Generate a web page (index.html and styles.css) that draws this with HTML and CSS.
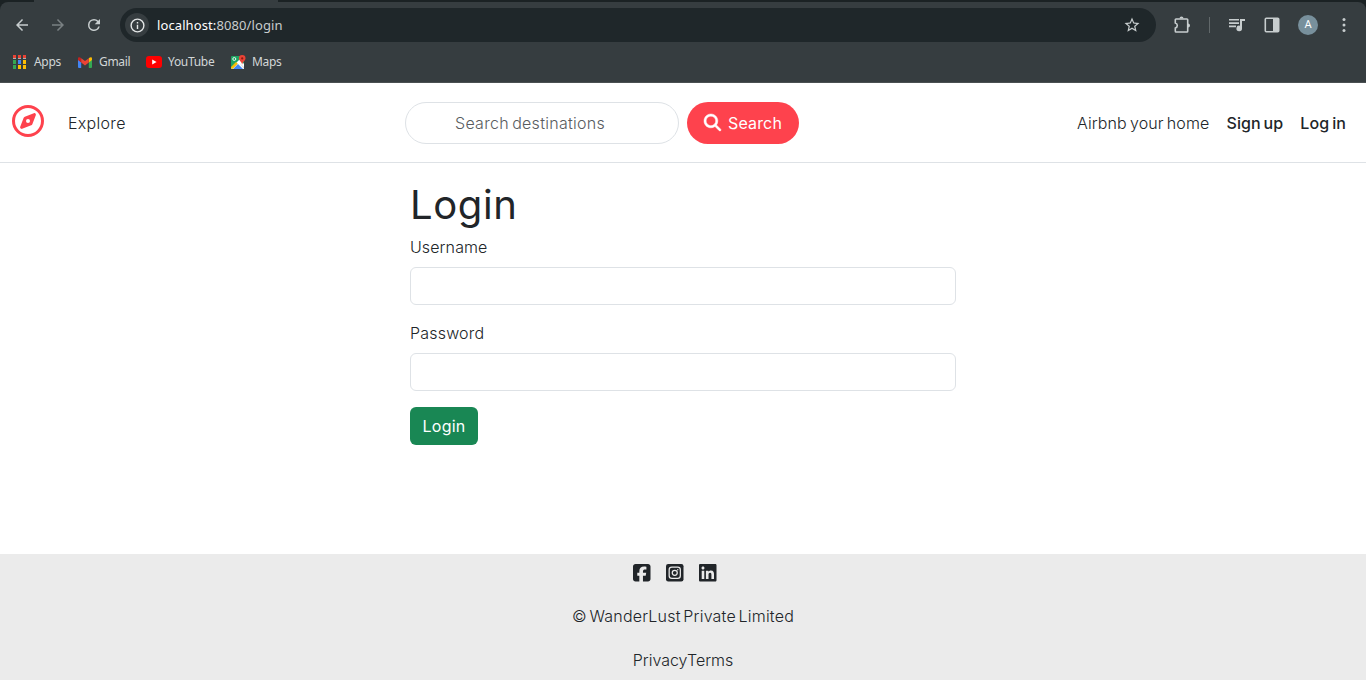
FILE: index.html
```html
<!DOCTYPE html>
<html lang="en">
<head>
<meta charset="utf-8">
<title>WanderLust</title>
<link rel="stylesheet" href="styles.css">
</head>
<body>
<div class="browser">
  <div class="tabstrip"><span class="active-tab"></span></div>
  <div class="panel">
    <div class="toolbar">
      <svg class="ic back" viewBox="0 0 24 24"><path d="M20 11H7.8l5.6-5.6L12 4l-8 8 8 8 1.4-1.4L7.8 13H20z"/></svg>
      <svg class="ic forward" viewBox="0 0 24 24"><path d="M12 4l-1.4 1.4 5.6 5.6H4v2h12.2l-5.6 5.6L12 20l8-8z"/></svg>
      <svg class="ic reload" viewBox="0 0 24 24"><path d="M17.65 6.35A7.96 7.96 0 0 0 12 4a8 8 0 1 0 7.73 10h-2.08A6 6 0 1 1 12 6c1.66 0 3.14.69 4.22 1.78L13 11h7V4z"/></svg>
      <div class="omnibox">
        <span class="site-info"><svg class="ic" viewBox="0 0 24 24"><path d="M11 7h2v2h-2zm0 4h2v6h-2zm1-9a10 10 0 1 0 0 20 10 10 0 0 0 0-20zm0 18a8 8 0 1 1 0-16 8 8 0 0 1 0 16z"/></svg></span>
        <span class="url"><b>localhost:</b>8080/login</span>
        <svg class="ic star" viewBox="0 0 24 24"><path d="M22 9.24l-7.19-.62L12 2 9.19 8.63 2 9.24l5.46 4.73L5.82 21 12 17.27 18.18 21l-1.63-7.03zM12 15.4l-3.76 2.27 1-4.28-3.32-2.88 4.38-.38L12 6.1l1.71 4.04 4.38.38-3.32 2.88 1 4.28z"/></svg>
      </div>
      <svg class="ic puzzle" viewBox="0 0 18 18"><path class="line" d="M3 3h11a.7.7 0 0 1 .7.700V15.300a.7.7 0 0 1-.7.700H3a.7.7 0 0 1-.7-.700V12q2-.5 2-2.500t-2-2.500V3.700A.7.7 0 0 1 3 3z"/><path d="M6.500 2.600a2 2 0 0 1 4 0zM15 7.500a2 2 0 0 1 0 4z"/></svg>
      <span class="divider"></span>
      <svg class="ic queue" viewBox="0 0 18 18"><path d="M1 3h10v1.6H1zM1 6.3h10v1.6H1zM1 9.6h7v1.6H1zM12 3h5v2h-3v7.2a2.8 2.8 0 1 1-2-2.5z"/></svg>
      <svg class="ic side" viewBox="0 0 16 16"><rect class="line" x="1.3" y="1.3" width="13.4" height="13.4" rx="1"/><path d="M9 1h6v14H9z"/></svg>
      <span class="avatar">A</span>
      <svg class="ic dots" viewBox="0 0 4 16"><circle cx="2" cy="2.6" r="1.5"/><circle cx="2" cy="8" r="1.5"/><circle cx="2" cy="13.4" r="1.5"/></svg>
    </div>
    <div class="bookmarks">
      <svg class="bm-ic apps" viewBox="0 0 13 14"><path fill="#ea4335" d="M0 0h3v3H0zM5 0h3v3H5zM10 0h3v3h-3z"/><path fill="#34a853" d="M0 5h3v4H0zM0 10h3v4H0z"/><path fill="#4285f4" d="M5 5h3v4H5z"/><path fill="#fbbc04" d="M10 5h3v4h-3zM5 10h3v4H5zM10 10h3v4h-3z"/><path fill="#aab0b1" d="M0 3h3v1H0zM5 3h3v1H5zM10 3h3v1h-3z"/></svg>
      <span class="bm bm-apps">Apps</span>
      <svg class="bm-ic gmail" viewBox="0 0 14 11"><path fill="#4285f4" d="M0 2.5l3.2 2.4V11H1a1 1 0 0 1-1-1z"/><path fill="#34a853" d="M14 2.5l-3.2 2.4V11H13a1 1 0 0 0 1-1z"/><path fill="#fbbc04" d="M10.8 1.2l1-.7Q14-.5 14 1.6v1.5l-3.2 2.4z"/><path fill="#c5221f" d="M3.2 1.2l-1-.7Q0-.5 0 1.6v1.5l3.2 2.4z"/><path fill="#ea4335" d="M3.2 1.2L7 4.1l3.8-2.9v4.3L7 8.4 3.2 5.5z"/></svg>
      <span class="bm bm-gmail">Gmail</span>
      <svg class="bm-ic youtube" viewBox="0 0 16 12"><rect width="16" height="12" rx="3" fill="#f00"/><path fill="#fff" d="M6.2 3.4v5.2L10.6 6z"/></svg>
      <span class="bm bm-youtube">YouTube</span>
      <svg class="bm-ic maps" viewBox="0 0 15 15"><rect y="1" width="13" height="13" rx="1" fill="#1ea362"/><path fill="#fff" d="M0 13L9 4l4 5v5H1z"/><path fill="#4285f4" d="M2 14l5-5 5 5z"/><path fill="#fbbc04" d="M0 12l5-5 1.8 1.8L1.6 14 0 13z"/><path fill="#d5d8d9" d="M8.5 8l4.5 4v2z"/><circle cx="3.3" cy="4" r="1.5" fill="none" stroke="#fff" stroke-width=".9"/><path fill="#ea4335" d="M11.2 0A3.3 3.3 0 0 1 14.5 3.4c0 2-2.6 3-3.3 6.1C10.5 6.400 7.900 5.400 7.900 3.400A3.300 3.300 0 0 1 11.200 0z"/><circle cx="11.2" cy="3.400" r="1.100" fill="#8c1a11"/></svg>
      <span class="bm bm-maps">Maps</span>
    </div>
  </div>
</div>
<nav class="navbar">
  <svg class="brand" viewBox="0 0 512 512"><path d="M464 256A208 208 0 1 0 48 256a208 208 0 1 0 416 0zM0 256a256 256 0 1 1 512 0A256 256 0 1 1 0 256zm306.700 69.100L162.400 380.600c-19.400 7.500-38.500-11.600-31-31l55.500-144.300c3.300-8.500 9.900-15.100 18.400-18.400l144.300-55.500c19.400-7.500 38.500 11.600 31 31L325.100 306.700c-3.200 8.500-9.900 15.100-18.400 18.400zM288 256a32 32 0 1 0-64 0 32 32 0 1 0 64 0z"/></svg>
  <a class="explore">Explore</a>
  <form class="search">
    <input class="search-input" placeholder="Search destinations">
    <button class="search-btn" type="button"><svg viewBox="0 0 512 512"><path d="M416 208c0 45.900-14.900 88.300-40 122.700L502.600 457.400c12.500 12.500 12.500 32.800 0 45.300s-32.800 12.500-45.300 0L330.700 376c-34.400 25.200-76.800 40-122.700 40C93.100 416 0 322.900 0 208S93.100 0 208 0s208 93.100 208 208zM208 352a144 144 0 1 0 0-288 144 144 0 1 0 0 288z"/></svg><span class="search-label">Search</span></button>
  </form>
  <div class="links"><a class="airbnb">Airbnb your home</a><a class="signup">Sign up</a><a class="login-link">Log in</a></div>
</nav>
<main class="login">
  <h1>Login</h1>
  <label class="user" for="u">Username</label>
  <input class="field" id="u">
  <label class="pass" for="p">Password</label>
  <input class="field" id="p" type="password">
  <button class="submit">Login</button>
</main>
<footer class="footer">
  <div class="social">
    <svg viewBox="0 32 448 448"><path d="M64 32C28.700 32 0 60.700 0 96V416c0 35.300 28.700 64 64 64h98.200V334.200H109.400V256h52.800V222.300c0-87.100 39.400-127.500 125-127.500c16.200 0 44.200 3.200 55.700 6.400V172c-6-.6-16.500-1-29.600-1c-42 0-58.200 15.900-58.200 57.200V256h83.600l-14.400 78.200H255V480H384c35.300 0 64-28.700 64-64V96c0-35.300-28.700-64-64-64H64z"/></svg>
    <svg viewBox="0 32 448 448"><rect y="32" width="448" height="448" rx="56"/><rect class="ig" x="81" y="113" width="286" height="286" rx="68"/><circle class="ig" cx="224" cy="256" r="64"/><circle class="ig-dot" cx="301" cy="179" r="18"/></svg>
    <svg viewBox="0 32 448 448"><path d="M416 32H31.900C14.300 32 0 46.500 0 64.300v383.400C0 465.500 14.300 480 31.900 480H416c17.600 0 32-14.500 32-32.300V64.300c0-17.800-14.400-32.300-32-32.300zM135.400 416H69V202.200h66.500V416zm-33.200-243c-21.300 0-38.500-17.300-38.500-38.500S80.900 96 102.200 96c21.200 0 38.500 17.300 38.500 38.500 0 21.300-17.200 38.500-38.500 38.500zm282.100 243h-66.400V312c0-24.800-.5-56.700-34.500-56.700-34.600 0-39.900 27-39.900 54.900V416h-66.400V202.200h63.700v29.200h.9c8.900-16.800 30.600-34.500 62.900-34.500 67.200 0 79.700 44.300 79.700 101.900V416z"/></svg>
  </div>
  <div class="copy">© WanderLust Private Limited</div>
  <div class="legal"><a>Privacy</a><a>Terms</a></div>
</footer>
</body>
</html>
```
FILE: styles.css
```css
* { box-sizing: border-box; }
body { margin: 0; height: 680px; overflow: hidden; display: flex; flex-direction: column; background: #fff; color: #212529; font: 300 16px/24px Inter, sans-serif; }
svg { display: block; flex: none; }
a, .bm, .url, button { white-space: nowrap; }

.browser { height: 83px; flex: none; background: #1b2224; font-family: "Noto Sans", sans-serif; font-weight: 400; }
.tabstrip { height: 2px; padding-left: 34px; }
.active-tab { display: block; width: 244px; height: 2px; background: #363d40; }
.panel { height: 81px; background: #363d40; border-radius: 8px 8px 0 0; border-bottom: 1px solid #4a5052; }
.toolbar { display: flex; align-items: center; height: 46px; padding-left: 13px; }
.ic { fill: #c7cdce; width: 18px; height: 18px; }
.line { fill: none; stroke: #c7cdce; stroke-width: 1.6; }
.forward { margin-left: 18px; fill: #7a8183; }
.reload { margin-left: 18px; }
.omnibox { display: flex; align-items: center; width: 1036px; height: 34px; margin-left: 17px; padding: 0 15px 0 5px; border-radius: 17px; background: #1f272a; }
.site-info { display: flex; align-items: center; justify-content: center; width: 24px; height: 24px; border-radius: 50%; background: #363d40; }
.site-info .ic { width: 17px; height: 17px; fill: #e3e6e6; }
.url { margin-left: 8px; font-size: 13px; letter-spacing: .1px; color: #c9cdce; }
.url b { font-weight: 400; color: #fff; }
.star { margin-left: auto; }
.puzzle { margin-left: 17px; }
.divider { width: 1px; height: 16px; margin-left: 18px; background: #61686a; }
.queue { margin-left: 18px; }
.side { width: 16px; height: 16px; margin-left: 18px; }
.avatar { width: 20px; height: 20px; margin-left: 18px; border-radius: 50%; background: #78909c; color: #fff; font: 400 11px/20px Roboto, sans-serif; text-align: center; }
.dots { width: 4px; height: 16px; margin-left: 24px; }
.bookmarks { display: flex; align-items: center; height: 28px; padding-left: 13px; font-size: 12px; letter-spacing: -.3px; color: #d2d6d7; }
.apps { width: 13px; height: 14px; }
.bm { flex: none; }
.bm-apps { width: 44px; margin-left: 8px; }
.gmail { width: 14px; height: 11px; }
.bm-gmail { width: 47px; margin-left: 7px; }
.youtube { width: 16px; height: 12px; }
.bm-youtube { width: 63px; margin-left: 6px; }
.maps { width: 15px; height: 15px; }
.bm-maps { margin-left: 6px; }

.navbar { display: flex; align-items: center; flex: none; height: 80px; padding: 0 20px 0 12px; border-bottom: 1px solid #dee2e6; }
.brand { width: 32px; height: 32px; margin-bottom: 4px; fill: #fe424d; }
.explore { width: 337px; margin-left: 24px; letter-spacing: .3px; }
.search { display: flex; gap: 8px; }
.search-input { width: 274px; height: 42px; padding: 0 48px 0 49px; border: 1px solid #dee2e6; border-radius: 21px; font: 300 16px/24px Inter, sans-serif; letter-spacing: .28px; word-spacing: -1.5px; }
.search-input::placeholder { color: #595c5f; }
.search-btn { display: flex; align-items: center; width: 112px; height: 42px; padding: 0 0 0 17px; border: 0; border-radius: 21px; background: #fe424d; color: #fff; font: 400 16px/24px Inter, sans-serif; letter-spacing: .15px; }
.search-btn svg { width: 17px; height: 17px; margin-right: 7px; fill: #fff; stroke: #fff; stroke-width: 14; overflow: visible; }
.links { display: flex; gap: 17px; margin-left: auto; }
.airbnb { letter-spacing: .12px; word-spacing: -1.5px; }
.signup, .login-link { font-weight: 500; word-spacing: -1.5px; letter-spacing: .1px; }

.login { display: flex; flex-direction: column; flex: 1; width: 546px; margin: 0 auto; padding-top: 18px; }
h1 { margin: 0 0 6px; font-size: 40px; line-height: 48px; font-weight: 400; letter-spacing: .6px; }
.user { letter-spacing: .1px; }
.pass { letter-spacing: .2px; }
.field { height: 38px; margin: 8px 0 16px; border: 1px solid #dee2e6; border-radius: 6px; }
.submit { width: 68px; height: 38px; padding: 0; border: 0; border-radius: 6px; background: #198754; color: #fff; font: 400 16px/24px Inter, sans-serif; letter-spacing: .2px; }

.footer { display: flex; flex-direction: column; align-items: center; flex: none; height: 126px; padding-top: 10px; background: #ebebeb; }
.social { display: flex; gap: 15.5px; width: 100px; height: 18px; }
.social svg { width: 17.5px; height: 17.5px; fill: #212529; }
.social .ig { fill: none; stroke: #ebebeb; stroke-width: 32; }
.social .ig-dot { fill: #ebebeb; }
.copy { margin-top: 22px; letter-spacing: .2px; word-spacing: -2px; }
.legal { margin-top: 20px; }
```
